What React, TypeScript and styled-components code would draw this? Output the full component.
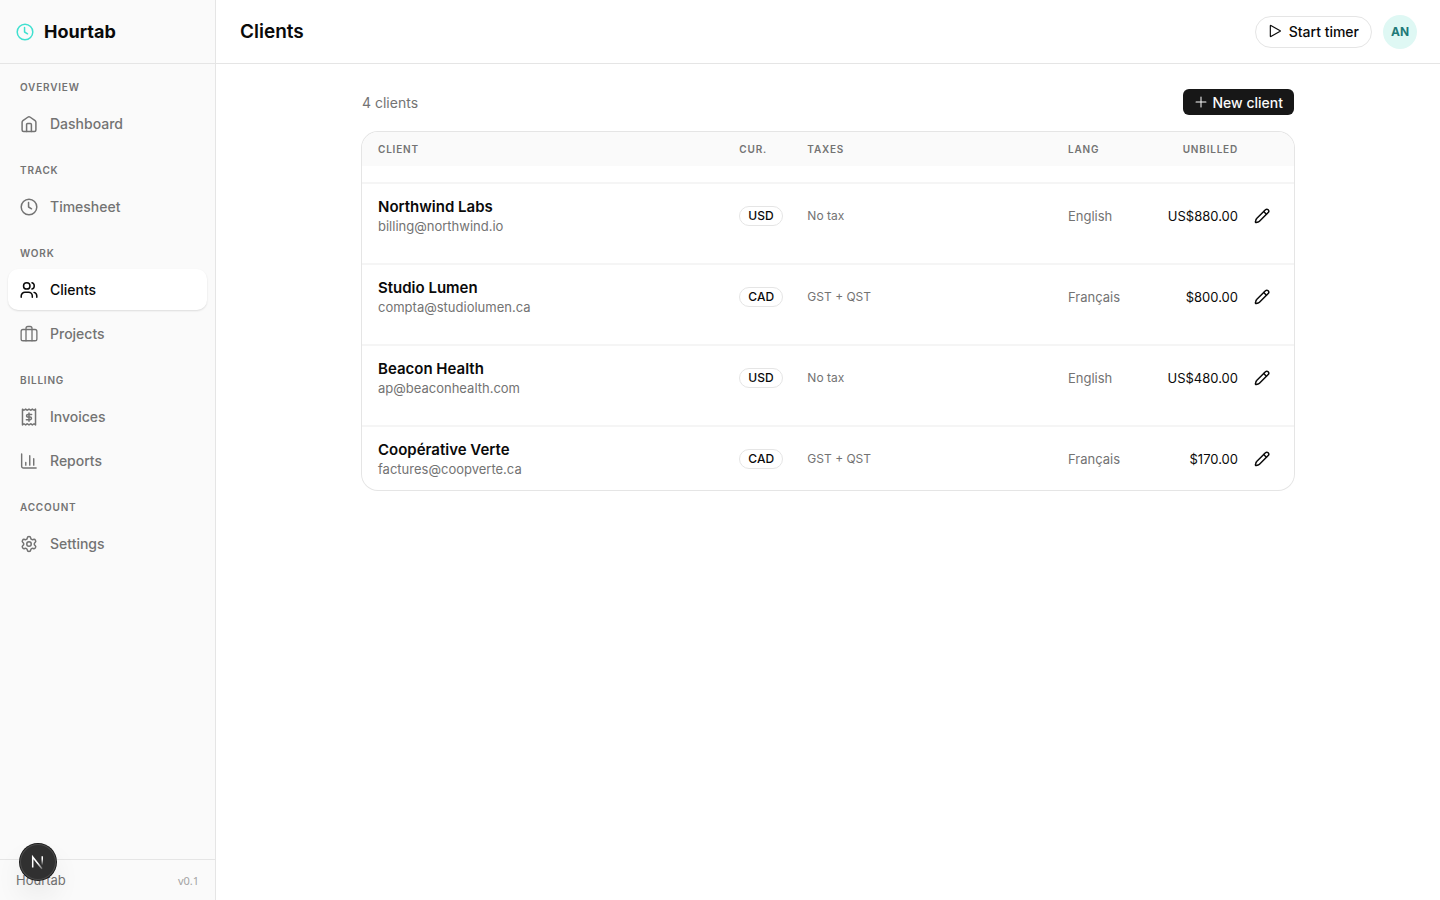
import React from "react";
import styled, { createGlobalStyle } from "styled-components";
import { Settings } from "lucide-react";

const GlobalStyle = createGlobalStyle`
  *, *::before, *::after { box-sizing: border-box; }
  body {
    margin: 0;
    background: #fff;
    color: #0a0a0a;
    font-family: Inter, "Liberation Sans", sans-serif;
    font-size: 14px;
    -webkit-font-smoothing: antialiased;
  }
  button { font: inherit; color: inherit; cursor: pointer; }
  a { color: inherit; text-decoration: none; }
`;

const Shell = styled.div`
  display: grid;
  grid-template-columns: 216px minmax(0, 1fr);
  min-height: 100vh;
`;

const Sidebar = styled.aside`
  display: flex;
  flex-direction: column;
  background: #fafafa;
  border-right: 1px solid #e5e5e5;
`;

const Brand = styled.a`
  display: flex;
  align-items: center;
  gap: 10px;
  height: 64px;
  padding: 0 16px;
  border-bottom: 1px solid #e5e5e5;
  font-size: 18px;
  font-weight: 700;

  svg { color: #40e0d0; }
`;

const Nav = styled.nav`
  display: flex;
  flex: 1;
  flex-direction: column;
  gap: 18px;
  padding: 15px 8px;
`;

const NavGroup = styled.section`
  display: flex;
  flex-direction: column;
`;

const GroupLabel = styled.h2`
  margin: 0 0 8px;
  padding: 0 12px;
  color: #737373;
  font-size: 10px;
  font-weight: 600;
  line-height: 16px;
  letter-spacing: 0.08em;
  text-transform: uppercase;
`;

const NavItems = styled.div`
  display: flex;
  flex-direction: column;
  gap: 3px;
`;

const NavLink = styled.a<{ $active?: boolean }>`
  display: flex;
  align-items: center;
  gap: 12px;
  height: 41px;
  padding: 0 12px;
  border-radius: 10px;
  background: ${(p) => (p.$active ? "#fff" : "transparent")};
  box-shadow: ${(p) => (p.$active ? "0 1px 2px rgba(0, 0, 0, 0.12)" : "none")};
  color: ${(p) => (p.$active ? "#0a0a0a" : "#737373")};
  font-weight: 500;
`;

const SidebarFooter = styled.footer`
  display: flex;
  align-items: center;
  justify-content: space-between;
  height: 41px;
  padding: 0 16px;
  border-top: 1px solid #e5e5e5;
  color: #737373;
  font-size: 13px;
`;

const Version = styled.span`
  color: #a3a3a3;
  font-family: "Noto Sans", sans-serif;
  font-size: 11px;
`;

const DevBadge = styled.button`
  position: fixed;
  bottom: 20px;
  left: 20px;
  display: flex;
  align-items: center;
  justify-content: center;
  width: 36px;
  height: 36px;
  padding: 0;
  border: 0;
  border-radius: 50%;
  background: #303030;
  box-shadow: 0 0 0 1px #171717, inset 0 0 0 1px #4a4a4a, 0 16px 32px -8px rgba(0, 0, 0, 0.24);
`;

const Page = styled.div`
  display: flex;
  flex-direction: column;
  min-width: 0;
`;

const TopBar = styled.header`
  display: flex;
  align-items: center;
  gap: 12px;
  height: 64px;
  padding: 0 24px;
  border-bottom: 1px solid #e5e5e5;
`;

const Title = styled.h1`
  flex: 1;
  margin: 0;
  font-size: 19px;
  font-weight: 600;
`;

const TimerButton = styled.button`
  display: flex;
  align-items: center;
  gap: 7px;
  height: 32px;
  padding: 0 12px 1px;
  border: 1px solid #e5e5e5;
  border-radius: 16px;
  background: #fff;
  font-weight: 500;
`;

const Avatar = styled.button`
  width: 32px;
  height: 32px;
  padding: 0;
  border: 0;
  border-radius: 50%;
  background: #dff8f4;
  box-shadow: 0 0 0 1px #dff8f4;
  color: #1f7a78;
  font-size: 12px;
  font-weight: 700;
`;

const Content = styled.main`
  display: flex;
  flex-direction: column;
  gap: 16px;
  width: 100%;
  max-width: 980px;
  margin: 0 auto;
  padding: 24px;
`;

const ListBar = styled.div`
  display: flex;
  align-items: center;
  justify-content: space-between;
  height: 28px;
  color: #737373;
`;

const NewButton = styled.button`
  display: flex;
  align-items: center;
  gap: 5px;
  height: 26px;
  padding: 0 11px;
  border: 0;
  border-radius: 6px;
  background: #171717;
  color: #fafafa;
  font-weight: 500;
`;

const ClientTable = styled.table`
  display: flex;
  flex-direction: column;
  gap: 16px;
  border-radius: 16px;
  box-shadow: 0 0 0 1px #e5e5e5;
  overflow: hidden;

  thead { display: block; background: #fafafa; }
  tbody { display: flex; flex-direction: column; gap: 16px; }
  tr {
    display: grid;
    grid-template-columns: 24fr 52px 17fr 64px 90px 24px;
    column-gap: 16px;
    align-items: center;
    padding: 0 16px;
  }
  thead tr { height: 34px; padding-bottom: 1px; }
  tbody tr { height: 65px; border-top: 2px solid #f5f5f5; }
`;

const HeadCell = styled.th<{ $end?: boolean }>`
  padding: 0;
  color: #737373;
  font-size: 10px;
  font-weight: 600;
  letter-spacing: 0.08em;
  text-align: ${(p) => (p.$end ? "right" : "left")};
  text-transform: uppercase;
`;

const Cell = styled.td`
  min-width: 0;
  padding: 0;
  color: #737373;
  font-size: 12px;
  white-space: nowrap;
`;

const LangCell = styled(Cell)`
  font-size: 13px;
`;

const AmountCell = styled(Cell)`
  color: #0a0a0a;
  font-size: 13px;
  text-align: right;
`;

const ClientName = styled.div`
  color: #0a0a0a;
  font-size: 15px;
  font-weight: 600;
  line-height: 20px;
`;

const ClientEmail = styled.div`
  font-size: 13px;
  line-height: 18px;
`;

const Currency = styled.span`
  display: inline-flex;
  align-items: center;
  height: 20px;
  padding: 0 8px;
  border: 1px solid #e5e5e5;
  border-radius: 10px;
  color: #0a0a0a;
  font-size: 12px;
  font-weight: 500;
`;

const EditButton = styled.button`
  display: flex;
  padding: 0;
  border: 0;
  background: none;
  color: #0a0a0a;
`;

const Glyph = styled.svg.attrs({
  viewBox: "0 0 24 24",
  fill: "none",
  stroke: "currentColor",
  strokeLinecap: "round",
  strokeLinejoin: "round",
  "aria-hidden": true,
})`
  flex: none;
`;

function Icon({ size = 18, weight = 2, children }: { size?: number; weight?: number; children: React.ReactNode }) {
  return (
    <Glyph width={size} height={size} strokeWidth={weight}>
      {children}
    </Glyph>
  );
}

const clockIcon = (
  <Icon>
    <circle cx="12" cy="12" r="10.4" />
    <path d="M11.400 6v6l4 2.400" />
  </Icon>
);

const houseIcon = (
  <Icon>
    <path d="M2.800 9.800c0-.9.400-1.700 1.100-2.200l6.400-4.600a2.900 2.900 0 0 1 3.400 0l6.400 4.600c.7.500 1.100 1.300 1.100 2.200V20a2 2 0 0 1-2 2H4.800a2 2 0 0 1-2-2z" />
    <path d="M8.800 22v-9.500a1.300 1.300 0 0 1 1.300-1.300h3.800a1.300 1.300 0 0 1 1.300 1.300V22" />
  </Icon>
);

const usersIcon = (
  <Icon>
    <circle cx="9" cy="6.500" r="4.300" />
    <path d="M1.600 21.500v-1.500a5 5 0 0 1 5-5h4.800a5 5 0 0 1 5 5v1.500" />
    <path d="M16 2.400a4.300 4.300 0 0 1 0 8.200" />
    <path d="M18.700 15.200a5 5 0 0 1 3.700 4.800v1.500" />
  </Icon>
);

const briefcaseIcon = (
  <Icon weight={1.75}>
    <rect x="1.500" y="6" width="21" height="15" rx="2.500" />
    <path d="M8 21V4.500A2.500 2.500 0 0 1 10.500 2h3A2.500 2.500 0 0 1 16 4.500V21" />
  </Icon>
);

const invoiceIcon = (
  <Icon>
    <path d="M3.300 1.500 5.300 3l2.200-1.500L9.800 3 12 1.500 14.200 3l2.300-1.500L18.700 3l2-1.500v21l-2-1.500-2.200 1.500-2.300-1.500-2.200 1.500L9.800 21l-2.300 1.500L5.300 21l-2 1.500z" />
    <path d="M15.500 8.500h-5a1.750 1.750 0 0 0 0 3.500h3a1.750 1.750 0 0 1 0 3.500h-5M12 6.500v11" />
  </Icon>
);

const reportsIcon = (
  <Icon weight={1.9}>
    <path d="M2.200 2.500V19a2.300 2.300 0 0 0 2.300 2.300h17" />
    <path d="M7.700 14v3.500M13 5v12.500M18.300 9v8.500" />
  </Icon>
);

const playIcon = (
  <Icon size={14}>
    <path d="M4 3v18a.6.6 0 0 0 .9.500l16-9a.6.6 0 0 0 0-1l-16-9A.6.6 0 0 0 4 3z" />
  </Icon>
);

const plusIcon = (
  <Icon size={14} weight={1.75}>
    <path d="M3.500 12h17M12 3.500v17" />
  </Icon>
);

const pencilIcon = (
  <Icon size={16} weight={2.200}>
    <path d="M17.200 2.700a2.900 2.900 0 0 1 4.100 4.100L8.200 20a4 4 0 0 1-1.900 1.100l-3 .7a.9.9 0 0 1-1.100-1.100l.7-3A4 4 0 0 1 4 15.900z" />
    <path d="m14.600 5.400 4 4" />
  </Icon>
);

function NextMark() {
  return (
    <svg width="16" height="16" viewBox="0 0 16 16" fill="none" aria-hidden="true">
      <defs>
        <linearGradient id="mark-fade" x1="0" y1="0" x2="0" y2="1">
          <stop offset="0.3" stopColor="#fff" />
          <stop offset="1" stopColor="#fff" stopOpacity="0" />
        </linearGradient>
        <linearGradient id="slash-fade" gradientUnits="userSpaceOnUse" x1="8" y1="9" x2="13" y2="15">
          <stop offset="0" stopColor="#fff" />
          <stop offset="1" stopColor="#fff" stopOpacity="0.2" />
        </linearGradient>
      </defs>
      <path d="M2.700 13.500V3L12 14.800" stroke="url(#slash-fade)" strokeWidth="1.500" />
      <path d="M11.500 2.300H13v9h-1.500z" fill="url(#mark-fade)" />
    </svg>
  );
}

type NavItem = { name: string; icon: React.ReactNode; active?: boolean };

const groups: { label: string; items: NavItem[] }[] = [
  { label: "Overview", items: [{ name: "Dashboard", icon: houseIcon }] },
  { label: "Track", items: [{ name: "Timesheet", icon: clockIcon }] },
  {
    label: "Work",
    items: [
      { name: "Clients", icon: usersIcon, active: true },
      { name: "Projects", icon: briefcaseIcon },
    ],
  },
  {
    label: "Billing",
    items: [
      { name: "Invoices", icon: invoiceIcon },
      { name: "Reports", icon: reportsIcon },
    ],
  },
  { label: "Account", items: [{ name: "Settings", icon: <Settings size={18} /> }] },
];

const clients = [
  { name: "Northwind Labs", email: "billing@northwind.io", currency: "USD", taxes: "No tax", lang: "English", unbilled: "US$880.00" },
  { name: "Studio Lumen", email: "compta@studiolumen.ca", currency: "CAD", taxes: "GST + QST", lang: "Français", unbilled: "$800.00" },
  { name: "Beacon Health", email: "ap@beaconhealth.com", currency: "USD", taxes: "No tax", lang: "English", unbilled: "US$480.00" },
  { name: "Coopérative Verte", email: "factures@coopverte.ca", currency: "CAD", taxes: "GST + QST", lang: "Français", unbilled: "$170.00" },
];

export default function App() {
  return (
    <>
      <GlobalStyle />
      <Shell>
        <Sidebar>
          <Brand href="#">
            {clockIcon}
            Hourtab
          </Brand>
          <Nav aria-label="Main">
            {groups.map((group) => (
              <NavGroup key={group.label}>
                <GroupLabel>{group.label}</GroupLabel>
                <NavItems>
                  {group.items.map((item) => (
                    <NavLink key={item.name} href="#" $active={item.active} aria-current={item.active ? "page" : undefined}>
                      {item.icon}
                      {item.name}
                    </NavLink>
                  ))}
                </NavItems>
              </NavGroup>
            ))}
          </Nav>
          <SidebarFooter>
            Hourtab
            <Version>v0.1</Version>
          </SidebarFooter>
        </Sidebar>
        <Page>
          <TopBar>
            <Title>Clients</Title>
            <TimerButton type="button">
              {playIcon}
              Start timer
            </TimerButton>
            <Avatar type="button">AN</Avatar>
          </TopBar>
          <Content>
            <ListBar>
              4 clients
              <NewButton type="button">
                {plusIcon}
                New client
              </NewButton>
            </ListBar>
            <ClientTable>
              <thead>
                <tr>
                  <HeadCell>Client</HeadCell>
                  <HeadCell>Cur.</HeadCell>
                  <HeadCell>Taxes</HeadCell>
                  <HeadCell>Lang</HeadCell>
                  <HeadCell $end>Unbilled</HeadCell>
                  <HeadCell aria-label="Actions" />
                </tr>
              </thead>
              <tbody>
                {clients.map((client) => (
                  <tr key={client.name}>
                    <Cell>
                      <ClientName>{client.name}</ClientName>
                      <ClientEmail>{client.email}</ClientEmail>
                    </Cell>
                    <Cell>
                      <Currency>{client.currency}</Currency>
                    </Cell>
                    <Cell>{client.taxes}</Cell>
                    <LangCell>{client.lang}</LangCell>
                    <AmountCell>{client.unbilled}</AmountCell>
                    <Cell>
                      <EditButton type="button" aria-label={`Edit ${client.name}`}>
                        {pencilIcon}
                      </EditButton>
                    </Cell>
                  </tr>
                ))}
              </tbody>
            </ClientTable>
          </Content>
        </Page>
      </Shell>
      <DevBadge type="button" aria-label="Open developer tools">
        <NextMark />
      </DevBadge>
    </>
  );
}
